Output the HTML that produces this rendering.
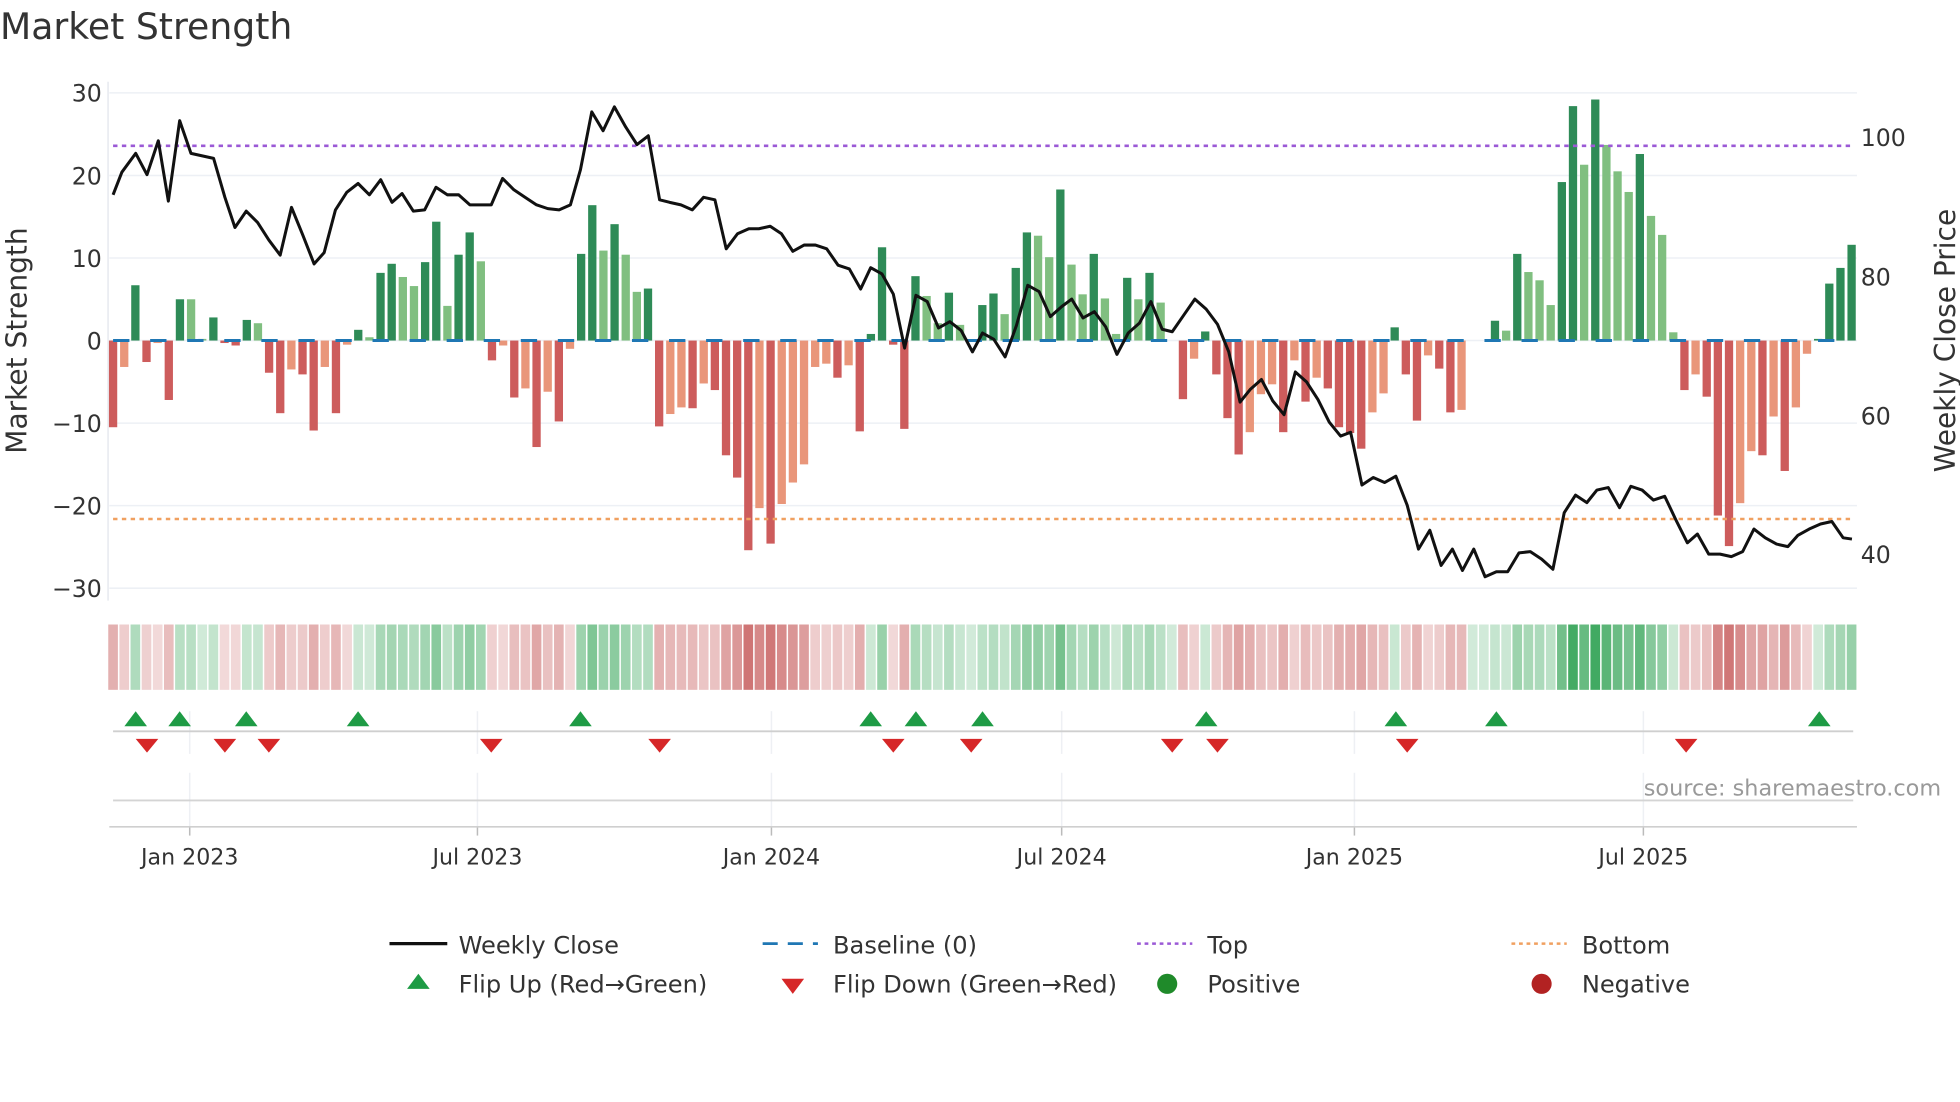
<!DOCTYPE html>
<html><head><meta charset="utf-8">
<style>
html,body{margin:0;padding:0;background:#fff;width:1960px;height:1102px;overflow:hidden}
svg{display:block}
text{font-family:"DejaVu Sans","Liberation Sans",sans-serif;fill:#333}
</style></head>
<body>
<svg id="s" width="1960" height="1102" viewBox="0 0 1560 877" xmlns="http://www.w3.org/2000/svg">
<text x="0" y="31" font-size="28.8">Market Strength</text>
<g id="grid"></g>
<g id="bars"></g>
<g id="heat"></g>
<g id="lower"></g>
<text x="1545" y="633" font-size="17.8" text-anchor="end" style="fill:#999">source: sharemaestro.com</text>
<text transform="translate(21,271) rotate(-90)" font-size="22.3" text-anchor="middle">Market Strength</text>
<text transform="translate(1556,271) rotate(-90)" font-size="22.3" text-anchor="middle">Weekly Close Price</text>
<g font-size="19.2">
<line x1="310" y1="751" x2="356" y2="751" stroke="#111" stroke-width="2.5"/>
<text x="365" y="759">Weekly Close</text>
<line x1="607" y1="751" x2="651" y2="751" stroke="#1f77b4" stroke-width="2.2" stroke-dasharray="12,8"/>
<text x="663" y="759">Baseline (0)</text>
<line x1="905" y1="751" x2="949" y2="751" stroke="#9b59d6" stroke-width="2" stroke-dasharray="3,3"/>
<text x="961" y="759">Top</text>
<line x1="1203" y1="751" x2="1247" y2="751" stroke="#f0a060" stroke-width="2" stroke-dasharray="3,3"/>
<text x="1259" y="759">Bottom</text>
<polygon points="333,775 342,787 324,787" fill="#1e9b45"/>
<text x="365" y="790">Flip Up (Red→Green)</text>
<polygon points="622,779 640,779 631,791" fill="#d62728"/>
<text x="663" y="790">Flip Down (Green→Red)</text>
<circle cx="929" cy="783" r="8" fill="#1f8a2a"/>
<text x="961" y="790">Positive</text>
<circle cx="1227" cy="783" r="8" fill="#b22222"/>
<text x="1259" y="790">Negative</text>
</g>
</svg>
<script>
var NS="http://www.w3.org/2000/svg";
function el(p,t,a,txt){var e=document.createElementNS(NS,t);for(var k in a)e.setAttribute(k,a[k]);if(txt!=null)e.textContent=txt;p.appendChild(e);return e;}
var g=document.getElementById('grid'),b=document.getElementById('bars'),h=document.getElementById('heat'),L=document.getElementById('lower');
function Y(v){return 271-v*6.57;}
var labs={30:"30",20:"20",10:"10",0:"0","-10":"−10","-20":"−20","-30":"−30"};
[30,20,10,0,-10,-20,-30].forEach(function(v){
 el(g,'line',{x1:87,x2:1478,y1:Y(v),y2:Y(v),stroke:'#edf0f5','stroke-width':1.2});
 el(g,'text',{x:81,y:Y(v)+7,'font-size':18.8,'text-anchor':'end'},labs[v]);
});
el(g,'line',{x1:86,x2:86,y1:65,y2:478,stroke:'#e6e9ef','stroke-width':1.2});
[[100,109],[80,220],[60,331],[40,441]].forEach(function(p){el(g,'text',{x:1481,y:p[1]+7,'font-size':18.8},p[0]);});
var V=[-10.5,-3.2,6.7,-2.6,-0.3,-7.2,5,5,0.2,2.8,-0.3,-0.6,2.5,2.1,-3.9,-8.8,-3.5,-4.1,-10.9,-3.2,-8.8,-0.5,1.3,0.4,8.2,9.3,7.7,6.6,9.5,14.4,4.2,10.4,13.1,9.6,-2.4,-0.6,-6.9,-5.8,-12.9,-6.2,-9.8,-1,
10.5,16.4,10.9,14.1,10.4,5.9,6.3,-10.4,-8.9,-8.1,-8.2,-5.2,-6,-13.9,-16.6,-25.4,-20.3,-24.6,-19.8,-17.2,-15,-3.2,-2.8,-4.5,-3,-11,0.8,11.3,-0.5,-10.7,
7.8,5.4,2.1,5.8,1.9,0,4.3,5.7,3.2,8.8,13.1,12.7,
10.1,18.3,9.2,5.6,10.5,5.1,0.8,7.6,5,8.2,4.6,0,-7.1,-2.2,1.1,-4.1,-9.4,-13.8,-11.1,-6.5,-5.3,-11.1,-2.4,-7.4,-4.5,-5.8,-10.5,-11.2,-13.1,-8.7,-6.4,1.6,-4.1,-9.7,-1.8,-3.4,-8.7,-8.4,0,0,
2.4,1.2,10.5,8.3,7.3,4.3,19.2,28.4,21.3,29.2,23.7,20.5,18,22.6,15.1,12.8,1,-6,-4.1,-6.8,-21.2,-24.9,-19.7,-13.4,-13.9,-9.2,-15.8,-8.1,-1.6,0.2,6.9,8.8,11.6];
var P=8.87,W=6.6;
for(var i=0;i<V.length;i++){
 var v=V[i],pv=i?V[i-1]:0,x=90+i*P;
 var c;
 if(v>=0){c=(v>pv)?'#2e8b57':'#80bf80';}else{c=(v<pv)?'#cd5c5c':'#e9967a';}
 if(Math.abs(v)>0.05){var y1=Y(Math.max(v,0)),y2=Y(Math.min(v,0));el(b,'rect',{x:x-W/2,y:y1,width:W,height:Math.max(y2-y1,0.8),fill:c});}
 var t=0.22+0.68*Math.min(Math.abs(v)/29,1),base=v>=0?[44,160,80]:[196,86,86];
 var rgb=base.map(function(q){return Math.round(255-(255-q)*t);});
 el(h,'rect',{x:x-P/2+0.6,y:497,width:P-1.2,height:52,fill:'rgb('+rgb.join(',')+')'});
}
el(b,'line',{x1:90,x2:1476,y1:271,y2:271,stroke:'#1f77b4','stroke-width':2.4,'stroke-dasharray':'13,16.5'});
el(b,'line',{x1:90,x2:1476,y1:116,y2:116,stroke:'#9b59d6','stroke-width':2,'stroke-dasharray':'3.5,3.5'});
el(b,'line',{x1:90,x2:1476,y1:413,y2:413,stroke:'#f0a060','stroke-width':2,'stroke-dasharray':'3.5,3.5'});
var pts=[[90,155],[97,137],[108,122],[117,139],[126,112],[134,160],[143,96],[152,122],[161,124],[170,126],[179,157],[187,181],[196,168],[205,177],[214,191],[223,203],[232,165],[241,187],[250,210],[258,201],[267,167],[276,153],[285,146],[294,155],[303,143],[312,161],[320,154],[329,168],[338,167],[347,149],[356,155],[365,155],[374,163],[383,163],[391,163],[400,142],[409,151],[418,157],[427,163],[436,166],[445,167],[454,163],[462,135],[471,89],[480,104],[489,85],[498,101],[507,115],[516,108],[525,159],[533,161],[542,163],[551,167],[560,157],[569,159],[578,198],[587,186],[596,182],[604,182],[613,180],[622,186],[631,200],[640,195],[649,195],[658,198],[667,211],[676,214],[685,230],[693,213],[702,218],[711,234],[720,277],[729,235],[738,240],[747,261],[756,256],[765,263],[774,280],[782,265],[791,270],[800,284],[809,259],[818,227],[827,232],[836,252],[845,244],[853,238],[862,253],[871,248],[880,260],[889,282],[898,265],[907,257],[916,240],[925,262],[933,264],[942,251],[951,238],[960,246],[969,258],[978,280],[987,320],[995,310],[1004,302],[1013,319],[1022,330],[1031,296],[1040,304],[1049,318],[1058,336],[1067,347],[1075,344],[1084,386],[1093,380],[1102,384],[1111,379],[1120,402],[1129,437],[1138,422],[1147,450],[1156,437],[1164,454],[1173,437],[1182,459],[1191,455],[1200,455],[1209,440],[1218,439],[1227,445],[1236,453],[1245,408],[1254,394],[1263,400],[1271,390],[1280,388],[1289,404],[1298,387],[1307,390],[1316,398],[1325,395],[1334,414],[1343,432],[1351,425],[1360,441],[1369,441],[1378,443],[1387,439],[1396,421],[1405,428],[1414,433],[1423,435],[1431,426],[1440,421],[1449,417],[1458,415],[1467,428],[1474,429]];
el(b,'polyline',{points:pts.map(function(p){return p.join(',');}).join(' '),fill:'none',stroke:'#111','stroke-width':2.4,'stroke-linejoin':'round'});
var ticks=[[151,'Jan 2023'],[380,'Jul 2023'],[614,'Jan 2024'],[845,'Jul 2024'],[1078,'Jan 2025'],[1308,'Jul 2025']];
ticks.forEach(function(t){
 el(L,'line',{x1:t[0],x2:t[0],y1:566,y2:600,stroke:'#eef0f4','stroke-width':1.2});
 el(L,'line',{x1:t[0],x2:t[0],y1:615,y2:658,stroke:'#eef0f4','stroke-width':1.2});
 el(L,'line',{x1:t[0],x2:t[0],y1:658,y2:665,stroke:'#bbb','stroke-width':1.2});
 el(L,'text',{x:t[0],y:688,'font-size':17.6,'text-anchor':'middle'},t[1]);
});
el(L,'line',{x1:90,x2:1475,y1:582,y2:582,stroke:'#cfcfcf','stroke-width':1.5});
el(L,'line',{x1:90,x2:1475,y1:637,y2:637,stroke:'#d4d4d4','stroke-width':1.5});
el(L,'line',{x1:87,x2:1478,y1:658,y2:658,stroke:'#cfcfcf','stroke-width':1.3});
[108,143,196,285,462,693,729,782,960,1111,1191,1448].forEach(function(x){el(L,'polygon',{points:(x)+',566 '+(x+9)+',578 '+(x-9)+',578',fill:'#1e9b45'});});
[117,179,214,391,525,711,773,933,969,1120,1342].forEach(function(x){el(L,'polygon',{points:(x-9)+',588 '+(x+9)+',588 '+x+',599',fill:'#d62728'});});
</script>
</body></html>
